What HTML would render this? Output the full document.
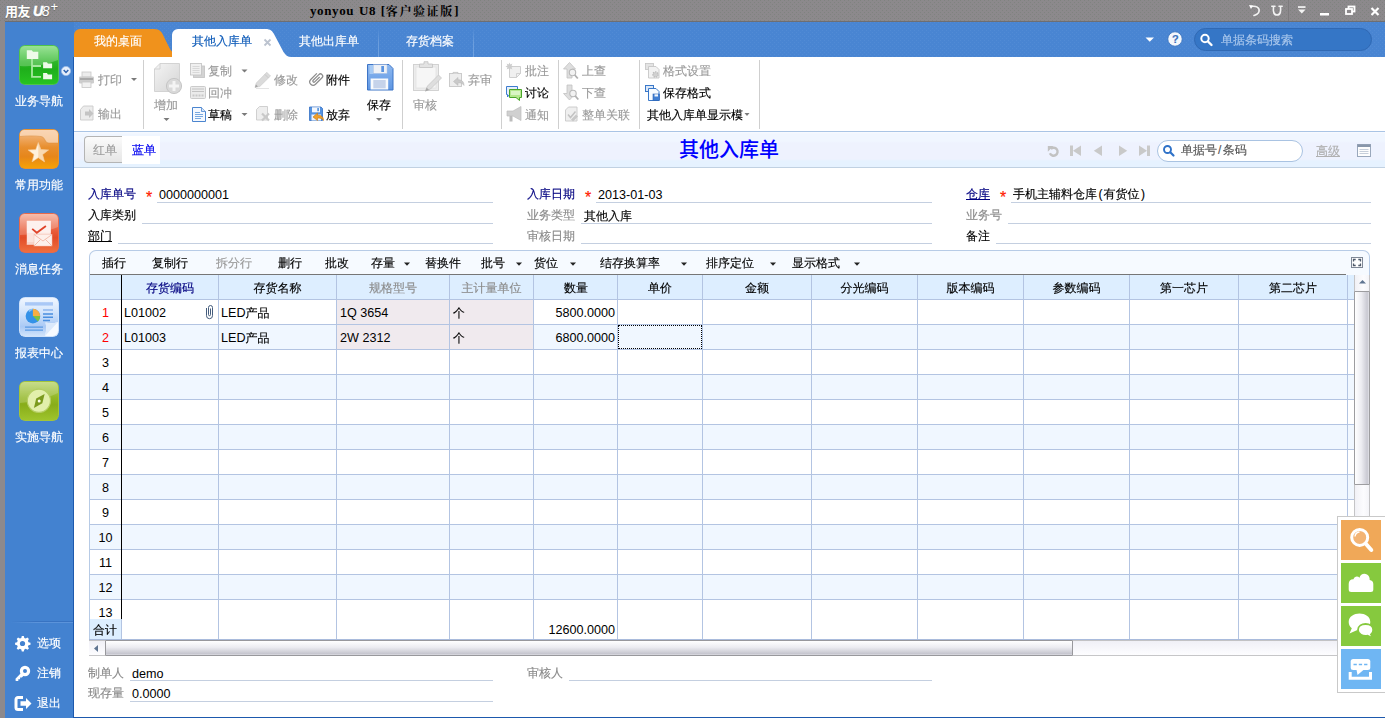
<!DOCTYPE html>
<html lang="zh-CN">
<head>
<meta charset="utf-8">
<title>yonyou U8 [客户验证版]</title>
<style>
*{box-sizing:border-box;margin:0;padding:0}
html,body{width:1385px;height:718px;overflow:hidden}
body{position:relative;background:#8c898c;font:12px/14px "Liberation Sans","WenQuanYi Zen Hei","Noto Sans CJK SC",sans-serif;color:#000;-webkit-text-stroke:.15px}
.abs,.abs>*{position:absolute}
.t{position:absolute;white-space:nowrap;line-height:14px;height:14px}
.g{color:#9a9a9a}
.n{font-size:12.6px;-webkit-text-stroke:0}
.t.n{margin-top:1px}
#grid .t.n{margin-top:0}
#grid span.n{top:0}
span.n{position:relative;top:1px}
/* title bar */
#titlebar{position:absolute;left:0;top:0;width:1385px;height:22px;background-color:#8c898c;
 background-image:radial-gradient(circle at .5px .5px,#7f837f 0,#7f837f .45px,transparent .75px),radial-gradient(circle at 2.5px 2.5px,#7f837f 0,#7f837f .45px,transparent .75px);background-size:4px 4px}
#brand{-webkit-text-stroke:0;left:5px;top:4px;color:#fff;font:bold 13px/14px "Liberation Sans","Noto Sans CJK SC",sans-serif;text-shadow:0 1px 1px #666;letter-spacing:-.5px}
#wtitle{-webkit-text-stroke:0;left:310px;top:4px;font:bold 13px/14px "Liberation Serif","Noto Serif CJK SC",serif;color:#000;letter-spacing:.6px;word-spacing:1px}
/* blue frame */
#blue{position:absolute;left:5px;top:21px;width:1380px;height:697px;background:#4382d0;border-top:1px solid #6e6e72}
#side{position:absolute;left:5px;top:23px;width:69px;height:693px}
.sicon{position:absolute;left:14px;width:40px;height:40px;border-radius:6px}
.slabel{position:absolute;left:1px;width:66px;text-align:center;color:#fff;font-size:12px;line-height:14px}
/* tabs */
#tabbar{position:absolute;left:74px;top:23px;width:1311px;height:34px}
/* content */
#content{position:absolute;left:74px;top:57px;width:1311px;height:660px;background:#fff;box-shadow:-1px 0 0 #1d59ad,-1px 1px 0 #1d59ad,0 1px 0 #1d59ad}
#toolbar{position:absolute;left:0;top:0;width:1311px;height:75px;background:#fff;border-bottom:1px solid #a9c4e5}
.vsep{position:absolute;top:3px;width:1px;height:69px;background:#cfcfcf}
#navrow{position:absolute;left:0;top:75px;width:1311px;height:36px;border-top:0;background:linear-gradient(#f8fbff 0,#f0f6ff 2px,#f0f6ff 9px,#eef2fe 11px,#eef2fe 27px,#e6f2ff 29px,#e6f2ff);border-bottom:1px solid #c1d1e2}
.ul{position:absolute;height:1px;background:#c4cfe0}
/* grid */
#form .g{color:#8a8a8a}
#grid{position:absolute;left:15px;top:193px;width:1280px;height:406px}
</style>
</head>
<body>
<div id="titlebar"></div>
<div class="t" id="brand">用友<i style="font-size:14px;letter-spacing:-1.500px;margin-left:3px;-webkit-text-stroke:.5px #fff">U</i><i style="font-size:14px;font-weight:normal;letter-spacing:-1px">8</i><span style="font-size:13px;font-weight:normal;position:relative;top:-5px;left:2px">+</span></div>
<div class="t" id="wtitle">yonyou U8 [<span style="font-size:12px;letter-spacing:1.600px;position:relative;top:.5px">客户验证版</span><span style="margin-left:.5px">]</span></div>
<svg class="t" style="left:1240px;top:0;width:145px;height:22px" viewBox="1240 0 145 22">
 <g fill="none" stroke="#f2f2f2" stroke-width="1.600" stroke-linecap="round">
  <path d="M1251 6.5c5-1 9 1 8 5c-.6 2.300-3 3.500-5 4"/>
  <path d="M1273.500 6.500c-.5 5 0 8.500 3.500 8.500s4-3.500 3.500-8.500M1271.800 6.300h3.200M1279 6.300h3.200"/>
 </g>
 <path d="M1249 5l4 .5-2 3.500z" fill="#fff"/>
 <rect x="1288" y="0" width="1" height="21" fill="#7d7b7d"/>
 <rect x="1298" y="6.200" width="7.500" height="1.700" fill="#f4f4f4"/>
 <path d="M1298 9.500h7.500l-3.750 4z" fill="#f4f4f4"/>
 <rect x="1320" y="13" width="9" height="2.500" fill="#fff"/>
 <g fill="none" stroke="#fff" stroke-width="1.800">
  <rect x="1348.500" y="6.500" width="6" height="5"/>
  <rect x="1346" y="9" width="6" height="5" fill="#8c898c"/>
  <path d="M1371.500 8l7 7M1378.500 8l-7 7" stroke-width="2.200"/>
 </g>
</svg>
<div id="blue"></div>
<div id="side">
 <!-- icon 1 : green tree -->
 <svg class="sicon" style="top:22px" viewBox="0 0 40 40">
  <defs>
   <linearGradient id="g1" x1="0" y1="0" x2="0" y2="1"><stop offset="0" stop-color="#7fdc7a"/><stop offset=".42" stop-color="#2fb62b"/><stop offset=".6" stop-color="#1fae1b"/><stop offset="1" stop-color="#27c421"/></linearGradient>
   <linearGradient id="g2" x1="0" y1="0" x2="0" y2="1"><stop offset="0" stop-color="#f6c193"/><stop offset=".45" stop-color="#e88f2f"/><stop offset=".7" stop-color="#e6861a"/><stop offset="1" stop-color="#f7a306"/></linearGradient>
   <linearGradient id="g3" x1="0" y1="0" x2="0" y2="1"><stop offset="0" stop-color="#f6ae99"/><stop offset=".45" stop-color="#e85c3a"/><stop offset=".62" stop-color="#e24c28"/><stop offset="1" stop-color="#f0703f"/></linearGradient>
   <linearGradient id="g4" x1="0" y1="0" x2="0" y2="1"><stop offset="0" stop-color="#f1f7ff"/><stop offset=".35" stop-color="#d5e6fc"/><stop offset=".75" stop-color="#a9c9f5"/><stop offset="1" stop-color="#d3e5fb"/></linearGradient>
   <linearGradient id="g5" x1="0" y1="0" x2="0" y2="1"><stop offset="0" stop-color="#bdd673"/><stop offset=".42" stop-color="#92b725"/><stop offset=".6" stop-color="#88ad19"/><stop offset="1" stop-color="#9fc52d"/></linearGradient>
  </defs>
  <rect x=".5" y=".5" width="39" height="39" rx="5" fill="url(#g1)" stroke="#4fc44a"/>
  <path d="M1 6a5 5 0 0 1 5-5h28a5 5 0 0 1 5 5v9c-12 5-26 7-38 6z" fill="#fff" opacity=".22"/>
  <g fill="#eefbe9"><path d="M7.800 5.200h5l1.200 1.600h5.300v7.200h-11.500z"/><path d="M24.100 17.200h3.800l1 1.300h4.200v4.800h-9z"/><path d="M24.100 28.100h3.800l1 1.300h4.200v4.800h-9z"/></g>
  <path d="M13 14v17.800h9M13 21h9" fill="none" stroke="#a6e8a0" stroke-width="1.800"/>
 </svg>
 <svg class="t" style="left:56px;top:43px;width:10px;height:10px" viewBox="0 0 10 10"><circle cx="5" cy="5" r="4.600" fill="#e6effb" stroke="#9dbce6" stroke-width=".8"/><path d="M2.700 4l2.300 2.400 2.300-2.400" fill="none" stroke="#2d63b0" stroke-width="1.500"/></svg>
 <div class="slabel" style="top:71px">业务导航</div>
 <!-- icon 2 : star -->
 <svg class="sicon" style="top:106px" viewBox="0 0 40 40">
  <rect x=".5" y=".5" width="39" height="39" rx="5" fill="url(#g2)" stroke="#e8932f"/>
  <path d="M1 7.500c8-.8 15-.8 21 0c2 .3 3 1.500 4 3.500c1 2 2 3 4 3h9v-8.500a4.500 4.500 0 0 0-4.500-4.500h-29a4.500 4.500 0 0 0-4.500 4.500z" fill="#fbdcc0" opacity=".75"/>
  <path d="M1 7.500c8-.8 15-.8 21 0c2 .3 3 1.500 4 3.500c1 2 2 3 4 3h9" fill="none" stroke="#d98a3a" stroke-width=".7" opacity=".7"/>
  <path d="M19.3 13.4 L21.9 20.6 L29.6 20.9 L23.6 25.6 L25.6 32.9 L19.3 28.7 L13.0 32.9 L15.0 25.6 L9.0 20.9 L16.7 20.6z" fill="#fff1dc" stroke="#f3c690" stroke-width=".6"/>
  <path d="M19.300 13.400L22 20.600l7.600.3-6 4.800 2 7.300-6.300-4.200z" fill="#f4c48c" opacity=".55"/>
 </svg>
 <div class="slabel" style="top:155px">常用功能</div>
 <!-- icon 3 : mail -->
 <svg class="sicon" style="top:190px" viewBox="0 0 40 40">
  <rect x=".5" y=".5" width="39" height="39" rx="5" fill="url(#g3)" stroke="#e8694a"/>
  <path d="M1 6a5 5 0 0 1 5-5h28a5 5 0 0 1 5 5v8c-12 5-26 8-38 8z" fill="#fff" opacity=".2"/>
  <rect x="7.800" y="7.800" width="24" height="24" fill="#fbe3dc"/><rect x="7.800" y="7.800" width="24" height="12" fill="#fff" opacity=".5"/>
  <path d="M7.800 30h8M7.800 31.500h8" stroke="#f0b3a2" stroke-width=".6"/>
  <path d="M13.200 15.900l4.600 3.900 9.100-6.800" fill="none" stroke="#e0442a" stroke-width="1.800"/>
  <rect x="15" y="21.300" width="18" height="11.700" fill="#fdf0eb" stroke="#f4c2b4" stroke-width=".5"/>
  <path d="M15 21.500l9 6.500 9-6.500M15 33l6.500-6.500M33 33l-6.500-6.500" fill="none" stroke="#efb09d" stroke-width=".8"/>
 </svg>
 <div class="slabel" style="top:239px">消息任务</div>
 <!-- icon 4 : report -->
 <svg class="sicon" style="top:274px" viewBox="0 0 40 40">
  <rect x=".5" y=".5" width="39" height="39" rx="5" fill="url(#g4)" stroke="#cfe2fa"/>
  <rect x="6" y="5.200" width="28" height="3.400" fill="#a9c8f6"/>
  <circle cx="13.900" cy="19.100" r="7.300" fill="#3492e8"/><path d="M13.900 19.100v-7.300a7.300 7.300 0 0 1 7.300 7.300z" fill="#f6ad42"/><path d="M13.900 19.100h7.300a7.300 7.300 0 0 1-2.300 5.300z" fill="#7dc242"/>
  <path d="M10 14.500a5.500 5.500 0 0 1 3.500-2.200" fill="none" stroke="#9fd0fb" stroke-width="1.500" opacity=".8"/>
  <path d="M24 13h10" stroke="#8db6ee" stroke-width="1.600"/><path d="M24 16.900h10M24 20.300h10M24 23.400h7" stroke="#4a8fe0" stroke-width="1.500"/>
  <path d="M6 30.200h18M6 33.200h18" stroke="#5a9ae4" stroke-width="1.300"/>
  <path d="M26 39c1.500-5 1.500-9.500.5-13.500c4 1 8.500 1 12.500-.5v9a5 5 0 0 1-5 5z" fill="#f6faff"/>
  <path d="M26.500 25.500c4 1 8.500 1 12.500-.5l-13 14c1.500-5 1.500-9.500.5-13.500z" fill="#dbe9fb"/>
 </svg>
 <div class="slabel" style="top:323px">报表中心</div>
 <!-- icon 5 : compass -->
 <svg class="sicon" style="top:358px" viewBox="0 0 40 40">
  <rect x=".5" y=".5" width="39" height="39" rx="5" fill="url(#g5)" stroke="#a3c43a"/>
  <path d="M1 6a5 5 0 0 1 5-5h28a5 5 0 0 1 5 5v6c-12 6-26 9-38 10z" fill="#fff" opacity=".18"/>
  <circle cx="19.900" cy="19.800" r="11.600" fill="#e2efab" stroke="#b4cd62" stroke-width="1.200"/>
  <path d="M25.600 13l-2.300 9.300-8.400 4.600 2.300-9.300z" fill="#7b9a1e"/><circle cx="20.200" cy="19.900" r="1.500" fill="#fbfde9"/>
 </svg>
 <div class="slabel" style="top:407px">实施导航</div>
 <div style="position:absolute;left:6px;top:598px;width:63px;height:1px;background:linear-gradient(90deg,#4382d0,#3873c2 40%,#3873c2)"></div><div style="position:absolute;left:6px;top:599px;width:63px;height:1px;background:linear-gradient(90deg,#4382d0,#5b93da 40%,#5b93da)"></div>
 <!-- bottom -->
 <svg class="t" style="left:9px;top:612px;width:17px;height:17px" viewBox="0 0 17 17"><path d="M8.500 1l1.300 0 .5 2 1.400.6 1.800-1 1.400 1.400-1 1.800.6 1.400 2 .5v2l-2 .5-.6 1.400 1 1.800-1.400 1.400-1.800-1-1.400.6-.5 2h-2l-.5-2-1.400-.6-1.800 1-1.400-1.400 1-1.800-.6-1.400-2-.5v-2l2-.5.600-1.400-1-1.800 1.400-1.400 1.800 1 1.400-.6.500-2z" fill="#fff"/><circle cx="8.500" cy="8.500" r="2.600" fill="#4382d0"/></svg>
 <div class="t" style="left:32px;top:613px;color:#fff">选项</div>
 <svg class="t" style="left:9px;top:642px;width:17px;height:17px" viewBox="0 0 17 17"><circle cx="11" cy="6" r="3.600" fill="none" stroke="#fff" stroke-width="3.200"/><path d="M7.500 7.500l-6 6.200 .2 2.300h2.600v-1.700h1.800v-1.700h1.800l2.800-3" fill="#fff"/></svg>
 <div class="t" style="left:32px;top:643px;color:#fff">注销</div>
 <svg class="t" style="left:9px;top:672px;width:18px;height:17px" viewBox="0 0 18 17"><path d="M9 2.500h-5a2 2 0 0 0-2 2v8a2 2 0 0 0 2 2h5" fill="none" stroke="#fff" stroke-width="3"/><path d="M6.500 6.300h5.500v-3.300l5.500 5.500-5.500 5.500v-3.300h-5.500z" fill="#fff"/></svg>
 <div class="t" style="left:32px;top:673px;color:#fff">退出</div>
</div>
<div style="position:absolute;left:74px;top:22px;width:1311px;height:35px;background-color:#4985d2;background-image:radial-gradient(circle at .5px .5px,#518bd5 0,#518bd5 .45px,transparent .75px),radial-gradient(circle at 2.500px 2.500px,#518bd5 0,#518bd5 .45px,transparent .75px);background-size:4px 4px"></div>
<div id="tabbar">
 <svg style="position:absolute;left:0;top:0;width:1311px;height:34px" viewBox="74 23 1311 34">
  <path d="M74 57v-22a6 6 0 0 1 6-6h74c6 0 8 3 10 8l6 12c1 2 2 3 4 3v5z" fill="#f0921c"/>
  <path d="M172 57v-22a6 6 0 0 1 6-6h87.500c5 0 7 2 9 6l9 17c2 3 4 5 8 5z" fill="#fff"/>
  <defs><linearGradient id="tsep" x1="0" y1="0" x2="0" y2="1"><stop offset="0" stop-color="#4a86d3"/><stop offset=".5" stop-color="#6a9ddd"/><stop offset="1" stop-color="#6fa1df"/></linearGradient></defs><rect x="378" y="28" width="1" height="29" fill="url(#tsep)"/><rect x="473" y="28" width="1" height="29" fill="url(#tsep)"/>
  <path d="M264.500 39.500l6 6M270.500 39.500l-6 6" stroke="#bcc3cf" stroke-width="1.800"/>
  <path d="M1145.500 37.500h8.500l-4.250 4.300z" fill="#fff"/>
  <circle cx="1175" cy="39" r="7.200" fill="#f4f7fc" stroke="#3b73bd" stroke-width=".8"/>
  <rect x="1194.500" y="28.500" width="177" height="22" rx="11" fill="#3576c6" stroke="#3069b4"/>
  <circle cx="1205" cy="38.500" r="3.700" fill="none" stroke="#fff" stroke-width="2"/><path d="M1208 41.500l3.500 3.500" stroke="#fff" stroke-width="2.400" stroke-linecap="round"/>
 </svg>
 <div class="t" style="left:20px;top:11px;color:#fff">我的桌面</div>
 <div class="t" style="left:118px;top:11px;color:#0c5ab8">其他入库单</div>
 <div class="t" style="left:225px;top:11px;color:#fff">其他出库单</div>
 <div class="t" style="left:332px;top:11px;color:#fff">存货档案</div>
 <div class="t" style="left:1098px;top:9px;color:#3a72bd;font:bold 11px/14px 'Liberation Sans',sans-serif">?</div>
 <div class="t" style="left:1147px;top:10px;color:#a9c7ec">单据条码搜索</div>
</div>
<div id="content">
 <div id="toolbar">
 <svg style="position:absolute;left:0;top:0;width:1311px;height:74px" viewBox="74 57 1311 74">
  <defs>
   <linearGradient id="gd" x1="0" y1="0" x2="1" y2="1"><stop offset="0" stop-color="#f4f4f4"/><stop offset="1" stop-color="#d4d4d4"/></linearGradient>
   <linearGradient id="gs" x1="0" y1="0" x2="0" y2="1"><stop offset="0" stop-color="#8db8f0"/><stop offset="1" stop-color="#5e96e2"/></linearGradient>
  </defs>
  <g fill="#cfcfcf">
   <rect x="143" y="60" width="1" height="69"/><rect x="402" y="60" width="1" height="69"/><rect x="501" y="60" width="1" height="69"/><rect x="558" y="60" width="1" height="69"/><rect x="639" y="60" width="1" height="69"/><rect x="759" y="60" width="1" height="69"/>
  </g>
  <!-- dropdown arrows -->
  <g fill="#7a7a7a">
   <path d="M131 78h6l-3 3z"/><path d="M163.500 118h6l-3 3z"/><path d="M241.500 69.500h6l-3 3z"/><path d="M241.500 113h6l-3 3z"/><path d="M376 118h6l-3 3z"/><path d="M744.500 113h5l-2.500 3z"/>
  </g>
  <!-- print -->
  <g>
   <rect x="82" y="72" width="9" height="5" fill="#ececec" stroke="#c9c9c9" stroke-width=".8"/>
   <rect x="79" y="76.500" width="15" height="7" rx="1.200" fill="#cdcdcd"/><rect x="80" y="78" width="13" height="2" fill="#a9a9a9"/>
   <rect x="82" y="82" width="9" height="5.500" fill="#f1f1f1" stroke="#c6c6c6" stroke-width=".8"/>
  </g>
  <!-- export -->
  <g>
   <path d="M80.500 109.500l3-3.500h9.500v14h-12.500z" fill="#ececec" stroke="#cbcbcb" stroke-width=".9"/>
   <path d="M85 111.500h4v-2.500l4.500 4.500-4.500 4.500v-2.500h-4z" fill="#c4c4c4"/>
  </g>
  <!-- add big -->
  <g>
   <path d="M154.500 69l5.500-5.500h19.500v28h-25z" fill="url(#gd)" stroke="#cfcfcf" stroke-width=".9"/>
   <path d="M154.500 69h5.500v-5.500" fill="none" stroke="#cfcfcf" stroke-width=".9"/>
   <circle cx="174" cy="86" r="7.600" fill="#d9d9d9" stroke="#c2c2c2" stroke-width=".9"/>
   <path d="M172.500 81h3v3.500h3.500v3h-3.500v3.500h-3v-3.500h-3.500v-3h3.500z" fill="#f4f4f4"/>
  </g>
  <!-- copy -->
  <g stroke="#c6c6c6" stroke-width=".9">
   <rect x="193.500" y="66" width="11" height="11.500" fill="#d3d3d3"/>
   <rect x="190.500" y="63.500" width="11" height="11.500" fill="#f0f0f0"/>
   <path d="M192.500 66.500h7M192.500 68.500h7M192.500 70.500h7M192.500 72.500h7" stroke-width=".7" stroke="#cdcdcd"/>
  </g>
  <!-- huichong -->
  <g>
   <rect x="190.500" y="86.500" width="15" height="12" rx="1" fill="#ebebeb" stroke="#c6c6c6" stroke-width=".9"/>
   <path d="M192 89h12M192 91.500h12" stroke="#c3c3c3" stroke-width="1"/>
   <path d="M192.500 95.500h2M195.500 95.500h2M198.500 95.500h2M201.500 95.500h2" stroke="#c8c8c8" stroke-width="2"/>
  </g>
  <!-- draft -->
  <g>
   <path d="M192.500 107.500h9l4 4v10h-13z" fill="#f5f9ff" stroke="#4b85cf" stroke-width="1"/>
   <path d="M201.500 107.500v4h4" fill="#d8e6f8" stroke="#4b85cf" stroke-width=".8"/>
   <path d="M195 112.500h5M195 114.500h8M195 116.500h8M195 118.500h6" stroke="#6b9fdd" stroke-width=".9"/>
  </g>
  <!-- modify pencil -->
  <g>
   <path d="M256 88.500h13" stroke="#e4e4e4" stroke-width="1"/>
   <path d="M255 87.500l1.300-4.500 10.500-10.700 3.700 3.700-10.700 10.500z" fill="#dbdbdb" stroke="#c8c8c8" stroke-width=".6"/>
   <path d="M264.800 74.300l3.700 3.700" stroke="#c4c4c4" stroke-width=".8"/>
   <path d="M255 87.500l.9-3 2.100 2.100z" fill="#a4a4a4"/>
  </g>
  <!-- delete -->
  <g>
   <path d="M256.500 109.500l3-3h8v13.500h-11z" fill="#eeeeee" stroke="#cccccc" stroke-width=".9"/>
   <path d="M262 113.500l7 7M269 113.500l-7 7" stroke="#c9c9c9" stroke-width="2.200"/>
  </g>
  <!-- attach paperclip -->
  <g fill="none" stroke="#8c8c8c" stroke-width="1.100" transform="translate(316 79) rotate(45) scale(1.120) translate(-4.500 -8.100)">
   <path d="M1.500 4V11.700A3 3 0 0 0 7.500 11.700V3.500A2 2 0 0 0 3.500 3.500V10.700A1 1 0 0 0 5.500 10.700V4.500"/>
  </g>
  <!-- abandon -->
  <g>
   <path d="M309.500 107h11.500l1.500 1.500v12h-13z" fill="#5593e0" stroke="#3570c4" stroke-width=".8"/>
   <rect x="312" y="107.300" width="8" height="5" fill="#f4f7fc"/><rect x="317.300" y="108" width="1.600" height="3.200" fill="#4f8fdc"/>
   <rect x="311.500" y="114.500" width="9.500" height="6" fill="#eef3fb"/>
   <path d="M313 117l4.500-4v2.200c3.500 0 6 1.300 6 5.300-1.300-2-3-2.600-6-2.500v2.500z" fill="#f0a02a" stroke="#c77810" stroke-width=".6"/>
  </g>
  <!-- save big -->
  <g>
   <path d="M367.500 64.500h21.500l4 4v21.500h-25.500z" fill="url(#gs)" stroke="#3d74c6" stroke-width="1"/>
   <rect x="369.500" y="65" width="3.500" height="9" fill="#a6caf4"/>
   <rect x="373.300" y="64.800" width="13.700" height="8.500" fill="#eef1f6" stroke="#b4c6e2" stroke-width=".5"/>
   <rect x="381.300" y="66" width="2.700" height="6" fill="#5a93e0"/>
   <rect x="370.600" y="78.500" width="17.600" height="11" fill="#f8fafd"/>
   <rect x="373.300" y="80" width="12.400" height="8.300" fill="#c6d3ea"/>
  </g>
  <!-- audit big -->
  <g>
   <rect x="413.500" y="64.500" width="25" height="26" fill="#ececec" stroke="#cfcfcf" stroke-width=".9"/>
   <rect x="416" y="67" width="20" height="21" fill="#f6f6f6" stroke="#dddddd" stroke-width=".6"/>
   <path d="M419.500 67.500v-3.500h4.500v-2.300h4v2.300h4.500v3.500z" fill="#e3e3e3" stroke="#c2c2c2" stroke-width=".8"/>
   <path d="M425.500 91l2-5 11-11 3 3-11 11z" fill="#dedede" stroke="#c4c4c4" stroke-width=".7"/>
   <path d="M425.100 91.400l1.500-3.800 2.400 2.400z" fill="#a8a8a8"/>
  </g>
  <!-- unaudit -->
  <g>
   <rect x="449.500" y="73.500" width="12" height="13" fill="#ededed" stroke="#c6c6c6" stroke-width=".9"/>
   <path d="M453 74v-1.600h5v1.600" fill="#d6d6d6" stroke="#c2c2c2" stroke-width=".7"/>
   <path d="M453.500 81.500l4.500-4v2.300c3.500 0 6 1.500 6 5.700-1.300-2.200-3-2.800-6-2.700v2.600z" fill="#c9c9c9" stroke="#b5b5b5" stroke-width=".5"/>
  </g>
  <!-- annotate -->
  <g>
   <path d="M509.500 66.500h11v7l-4 4h-7z" fill="#f0f0f0" stroke="#c9c9c9" stroke-width=".9"/>
   <path d="M520.500 73.500h-4v4" fill="none" stroke="#c9c9c9" stroke-width=".8"/>
   <path d="M509.500 62.500l.9 2 2-.9-.9 2 2 .9-2 .9.900 2-2-.9-.9 2-.9-2-2 .9.900-2-2-.9 2-.9-.9-2 2 .9z" fill="#cdcdcd"/>
  </g>
  <!-- discuss -->
  <g>
   <path d="M506.500 86.500h11v8h-8l-2 2.500v-2.500h-1z" fill="#e6effa" stroke="#3d7ccf" stroke-width="1"/>
   <path d="M509.500 89.500h12v8h-2v3l-3.500-3h-6.500z" fill="#b4e88e" stroke="#4aa52a" stroke-width="1"/><rect x="511" y="91" width="9" height="4" fill="#d9f5c4"/>
  </g>
  <!-- notify megaphone -->
  <g>
   <path d="M507 111h6l8-4.500v14l-8-4.500h-6z" fill="#d0d0d0" stroke="#bdbdbd" stroke-width=".7"/>
   <rect x="509.500" y="116" width="3" height="5.500" fill="#bcbcbc"/>
  </g>
  <!-- up query -->
  <g>
   <path d="M569.500 62.500l6 6.500h-3.500v9h-5v-9h-3.500z" fill="#dedede" stroke="#c2c2c2" stroke-width=".8"/>
   <circle cx="572.500" cy="72.500" r="3.200" fill="#f2f2f2" stroke="#b9b9b9" stroke-width="1.100"/><path d="M574.800 75l3 3.500" stroke="#b0b0b0" stroke-width="1.800"/>
  </g>
  <!-- down query -->
  <g>
   <path d="M569.500 100l6-6.500h-3.500v-8.500h-5v8.500h-3.500z" fill="#dedede" stroke="#c2c2c2" stroke-width=".8"/>
   <circle cx="573" cy="93.500" r="3.200" fill="#f2f2f2" stroke="#b9b9b9" stroke-width="1.100"/><path d="M575.300 96l3 3.500" stroke="#b0b0b0" stroke-width="1.800"/>
  </g>
  <!-- link whole -->
  <g>
   <path d="M565.500 110l3-3h8.500v14h-11.500z" fill="#efefef" stroke="#c8c8c8" stroke-width=".9"/>
   <path d="M568 114.500l2.500 3 5-6" fill="none" stroke="#c2c2c2" stroke-width="1.500"/>
   <path d="M571 119.500l5-5 2 2-5 5z" fill="#c8c8c8"/>
  </g>
  <!-- format setting -->
  <g>
   <rect x="645.500" y="63.500" width="8" height="6" fill="#e4e4e4" stroke="#c4c4c4" stroke-width=".8"/>
   <path d="M648.500 66.500h7.500l3 3v8.500h-10.500z" fill="#f2f2f2" stroke="#c6c6c6" stroke-width=".9"/>
   <circle cx="655.500" cy="74.500" r="2.600" fill="#d0d0d0" stroke="#bcbcbc" stroke-width="1.400" stroke-dasharray="1.300 1"/>
  </g>
  <!-- save format -->
  <g>
   <rect x="645.500" y="85.500" width="8" height="6" fill="#dbe8f8" stroke="#3a78c9" stroke-width="1"/>
   <path d="M648.500 88.500h7.500l3 3v9h-10.500z" fill="#f7fbff" stroke="#3a78c9" stroke-width="1"/>
   <rect x="653" y="94" width="6.500" height="6.500" fill="#3f7ed3" stroke="#2a62b2" stroke-width=".6"/><rect x="654.500" y="94.300" width="3.500" height="2.200" fill="#f2f6fb"/>
  </g>
 </svg>
 <div class="t g" style="left:24px;top:16px">打印</div>
 <div class="t g" style="left:24px;top:50px">输出</div>
 <div class="t g" style="left:80px;top:41px">增加</div>
 <div class="t g" style="left:134px;top:7px">复制</div>
 <div class="t g" style="left:134px;top:29px">回冲</div>
 <div class="t" style="left:134px;top:51px">草稿</div>
 <div class="t g" style="left:200px;top:16px">修改</div>
 <div class="t g" style="left:200px;top:51px">删除</div>
 <div class="t" style="left:252px;top:16px">附件</div>
 <div class="t" style="left:252px;top:51px">放弃</div>
 <div class="t" style="left:293px;top:41px">保存</div>
 <div class="t g" style="left:339px;top:41px">审核</div>
 <div class="t g" style="left:394px;top:16px">弃审</div>
 <div class="t g" style="left:451px;top:7px">批注</div>
 <div class="t" style="left:451px;top:29px">讨论</div>
 <div class="t g" style="left:451px;top:51px">通知</div>
 <div class="t g" style="left:508px;top:7px">上查</div>
 <div class="t g" style="left:508px;top:29px">下查</div>
 <div class="t g" style="left:508px;top:51px">整单关联</div>
 <div class="t g" style="left:589px;top:7px">格式设置</div>
 <div class="t" style="left:589px;top:29px">保存格式</div>
 <div class="t" style="left:573px;top:51px">其他入库单显示模</div>
</div>
 <div id="navrow">
  <div style="position:absolute;left:10px;top:4px;width:38px;height:27px;border:1px solid #b4b4b4;border-right:none;border-radius:4px 0 0 4px;background:linear-gradient(#fbfbfb,#e6e6e6)"></div>
  <div style="position:absolute;left:48px;top:4px;width:38px;height:28px;background:#fff"></div>
  <div class="t" style="left:19px;top:11px;color:#9c9c9c">红单</div>
  <div class="t" style="left:58px;top:11px;color:#0000f0">蓝单</div>
  <div class="t" style="left:605px;top:6px;height:24px;font:500 20px/24px 'Liberation Sans','Noto Sans CJK SC',sans-serif;color:#0000ff;-webkit-text-stroke:0">其他入库单</div>
  <svg style="position:absolute;left:966px;top:4px;width:345px;height:30px" viewBox="1040 136 345 30">
   <g fill="none" stroke="#c2c2c2" stroke-width="2.400"><path d="M1050.800 148.800A4 4 0 1 1 1049.900 153.300"/></g><path d="M1047.800 146h5.700l-5.700 5.700z" fill="#c2c2c2"/>
   <g fill="#c9c9c9">
    <rect x="1070" y="145.500" width="3" height="10.500"/><path d="M1081 145.500v10.500l-8-5.250z"/>
    <path d="M1102 145.500v10.500l-8.200-5.250z"/>
    <path d="M1119 145.500v10.500l8.200-5.250z"/>
    <path d="M1139 145.500v10.500l8-5.250z"/><rect x="1147" y="145.500" width="3" height="10.500"/>
   </g>
   <rect x="1157.500" y="140.500" width="145" height="21" rx="10.500" fill="#fff" stroke="#a9c3e2"/>
   <circle cx="1167.500" cy="149.500" r="3.500" fill="none" stroke="#2f72c8" stroke-width="1.900"/><path d="M1170.500 152.500l3 3" stroke="#2f72c8" stroke-width="2.200" stroke-linecap="round"/>
   <rect x="1357.500" y="144.500" width="13" height="12" fill="#fdfdfd" stroke="#9aa8bc"/><rect x="1357.500" y="144.500" width="13" height="2.500" fill="#8896aa"/>
   <path d="M1359.500 149.500h9M1359.500 151.500h9M1359.500 153.500h9" stroke="#bfc8d6" stroke-width=".9"/>
  </svg>
  <div class="t" style="left:1107px;top:11px;color:#555">单据号<span style="margin:0 1.500px 0 1px">/</span>条码</div>
  <div class="t" style="left:1242px;top:12px;color:#b0b0b0;text-decoration:underline">高级</div>
 </div>
 <!-- form header -->
 <div id="form">
  <div class="t" style="left:14px;top:130px;color:#000080">入库单号</div><div class="t" style="left:72px;top:134px;color:#ff1a00;font:16px/14px 'Liberation Sans',sans-serif;-webkit-text-stroke:.2px #ff1a00">*</div><div class="t n" style="left:85px;top:130px">0000000001</div><div class="ul" style="left:83px;top:145px;width:336px"></div>
  <div class="t" style="left:14px;top:151px">入库类别</div><div class="ul" style="left:68px;top:166px;width:351px"></div>
  <div class="t" style="left:14px;top:172px;text-decoration:underline">部门</div><div class="ul" style="left:44px;top:186px;width:375px"></div>

  <div class="t" style="left:453px;top:130px;color:#000080">入库日期</div><div class="t" style="left:511px;top:134px;color:#ff1a00;font:16px/14px 'Liberation Sans',sans-serif;-webkit-text-stroke:.2px #ff1a00">*</div><div class="t n" style="left:524px;top:130px">2013-01-03</div><div class="ul" style="left:522px;top:145px;width:336px"></div>
  <div class="t g" style="left:453px;top:151px">业务类型</div><div class="t" style="left:510px;top:152px">其他入库</div><div class="ul" style="left:507px;top:166px;width:351px"></div>
  <div class="t g" style="left:453px;top:172px">审核日期</div><div class="ul" style="left:507px;top:186px;width:351px"></div>

  <div class="t" style="left:892px;top:130px;color:#000080;text-decoration:underline">仓库</div><div class="t" style="left:926px;top:134px;color:#ff1a00;font:16px/14px 'Liberation Sans',sans-serif;-webkit-text-stroke:.2px #ff1a00">*</div><div class="t" style="left:939px;top:130px">手机主辅料仓库<span style="margin:0 1px 0 1.500px">(</span>有货位<span style="margin-left:1.500px">)</span></div><div class="ul" style="left:937px;top:145px;width:360px"></div>
  <div class="t g" style="left:892px;top:151px">业务号</div><div class="ul" style="left:934px;top:166px;width:363px"></div>
  <div class="t" style="left:892px;top:172px">备注</div><div class="ul" style="left:922px;top:186px;width:375px"></div>
  <!-- footer -->
  <div class="t g" style="left:14px;top:609px">制单人</div><div class="t n" style="left:58px;top:609px">demo</div><div class="ul" style="left:56px;top:623px;width:363px"></div>
  <div class="t g" style="left:453px;top:609px">审核人</div><div class="ul" style="left:495px;top:623px;width:363px"></div>
  <div class="t g" style="left:14px;top:629px">现存量</div><div class="t n" style="left:58px;top:629px">0.0000</div><div class="ul" style="left:56px;top:644px;width:363px"></div>
 </div>
 <div id="grid">
<div style="position:absolute;left:0;top:0;width:1281px;height:25px;border:1px solid #b7cbe6;border-bottom:none;border-radius:7px 7px 0 0;background:#f6faff"></div>
<div class="t" style="left:13px;top:6px">插行</div>
<div class="t" style="left:63px;top:6px">复制行</div>
<div class="t g" style="left:127px;top:6px">拆分行</div>
<div class="t" style="left:189px;top:6px">删行</div>
<div class="t" style="left:236px;top:6px">批改</div>
<div class="t" style="left:282px;top:6px">存量</div>
<div class="t" style="left:336px;top:6px">替换件</div>
<div class="t" style="left:392px;top:6px">批号</div>
<div class="t" style="left:445px;top:6px">货位</div>
<div class="t" style="left:511px;top:6px">结存换算率</div>
<div class="t" style="left:617px;top:6px">排序定位</div>
<div class="t" style="left:703px;top:6px">显示格式</div>
<svg style="position:absolute;left:0;top:0;width:1281px;height:25px" viewBox="89 250 1281 25"><g fill="#222"><path d="M404 262.500h6l-3 3.200z"/><path d="M516 262.500h6l-3 3.200z"/><path d="M570 262.500h6l-3 3.200z"/><path d="M681 262.500h6l-3 3.200z"/><path d="M770 262.500h6l-3 3.200z"/><path d="M854 262.500h6l-3 3.200z"/></g><rect x="1351.500" y="257.500" width="11" height="10" fill="#fff" stroke="#7f8896"/><path d="M1353.500 261.500v-2h2.200M1358.300 259.500h2.200v2M1360.500 263.500v2h-2.200M1355.700 265.500h-2.200v-2" fill="none" stroke="#4f5a6b" stroke-width="1.300"/></svg>
<div style="position:absolute;left:1px;top:24px;width:1256px;height:1px;background:#767676"></div>
<div style="position:absolute;left:0;top:25px;width:1px;height:365px;background:#b7cbe6"></div>
<div style="position:absolute;left:1px;top:25px;width:1264px;height:25px;background:#ddeeff;border-bottom:1px solid #b3c4e2"></div>
<div style="position:absolute;left:1px;top:50px;width:1264px;height:25px;background:#fff;border-bottom:1px solid #b3c4e2;"></div>
<div style="position:absolute;left:1px;top:75px;width:1264px;height:25px;background:#f0f7ff;border-bottom:1px solid #b3c4e2;"></div>
<div style="position:absolute;left:1px;top:100px;width:1264px;height:25px;background:#fff;border-bottom:1px solid #b3c4e2;"></div>
<div style="position:absolute;left:1px;top:125px;width:1264px;height:25px;background:#f0f7ff;border-bottom:1px solid #b3c4e2;"></div>
<div style="position:absolute;left:1px;top:150px;width:1264px;height:25px;background:#fff;border-bottom:1px solid #b3c4e2;"></div>
<div style="position:absolute;left:1px;top:175px;width:1264px;height:25px;background:#f0f7ff;border-bottom:1px solid #b3c4e2;"></div>
<div style="position:absolute;left:1px;top:200px;width:1264px;height:25px;background:#fff;border-bottom:1px solid #b3c4e2;"></div>
<div style="position:absolute;left:1px;top:225px;width:1264px;height:25px;background:#f0f7ff;border-bottom:1px solid #b3c4e2;"></div>
<div style="position:absolute;left:1px;top:250px;width:1264px;height:25px;background:#fff;border-bottom:1px solid #b3c4e2;"></div>
<div style="position:absolute;left:1px;top:275px;width:1264px;height:25px;background:#f0f7ff;border-bottom:1px solid #b3c4e2;"></div>
<div style="position:absolute;left:1px;top:300px;width:1264px;height:25px;background:#fff;border-bottom:1px solid #b3c4e2;"></div>
<div style="position:absolute;left:1px;top:325px;width:1264px;height:25px;background:#f0f7ff;border-bottom:1px solid #b3c4e2;"></div>
<div style="position:absolute;left:1px;top:350px;width:1264px;height:19px;background:#fff;"></div>
<div style="position:absolute;left:1px;top:369px;width:1264px;height:20px;background:#fff"></div>
<div style="position:absolute;left:1px;top:369px;width:31px;height:20px;background:#ddeeff"></div>
<div style="position:absolute;left:248px;top:50px;width:196px;height:24px;background:#f0eaee"></div>
<div style="position:absolute;left:248px;top:75px;width:196px;height:24px;background:#f0eaee"></div>
<div style="position:absolute;left:129px;top:25px;width:1px;height:364px;background:#b3c4e2"></div>
<div style="position:absolute;left:247px;top:25px;width:1px;height:364px;background:#b3c4e2"></div>
<div style="position:absolute;left:360px;top:25px;width:1px;height:364px;background:#b3c4e2"></div>
<div style="position:absolute;left:444px;top:25px;width:1px;height:364px;background:#b3c4e2"></div>
<div style="position:absolute;left:528px;top:25px;width:1px;height:364px;background:#b3c4e2"></div>
<div style="position:absolute;left:613px;top:25px;width:1px;height:364px;background:#b3c4e2"></div>
<div style="position:absolute;left:722px;top:25px;width:1px;height:364px;background:#b3c4e2"></div>
<div style="position:absolute;left:828px;top:25px;width:1px;height:364px;background:#b3c4e2"></div>
<div style="position:absolute;left:934px;top:25px;width:1px;height:364px;background:#b3c4e2"></div>
<div style="position:absolute;left:1040px;top:25px;width:1px;height:364px;background:#b3c4e2"></div>
<div style="position:absolute;left:1149px;top:25px;width:1px;height:364px;background:#b3c4e2"></div>
<div style="position:absolute;left:1258px;top:25px;width:1px;height:364px;background:#b3c4e2"></div>
<div style="position:absolute;left:32px;top:25px;width:1px;height:344px;background:#000"></div><div style="position:absolute;left:32px;top:369px;width:1px;height:20px;background:#b3c4e2"></div>
<div class="t" style="left:33px;top:31px;width:96px;text-align:center;color:#000080">存货编码</div>
<div class="t" style="left:130px;top:31px;width:117px;text-align:center;color:#000">存货名称</div>
<div class="t" style="left:248px;top:31px;width:112px;text-align:center;color:#8c8c8c">规格型号</div>
<div class="t" style="left:361px;top:31px;width:83px;text-align:center;color:#8c8c8c">主计量单位</div>
<div class="t" style="left:445px;top:31px;width:84px;text-align:center;color:#000">数量</div>
<div class="t" style="left:529px;top:31px;width:84px;text-align:center;color:#000">单价</div>
<div class="t" style="left:614px;top:31px;width:108px;text-align:center;color:#000">金额</div>
<div class="t" style="left:723px;top:31px;width:105px;text-align:center;color:#000">分光编码</div>
<div class="t" style="left:829px;top:31px;width:105px;text-align:center;color:#000">版本编码</div>
<div class="t" style="left:935px;top:31px;width:105px;text-align:center;color:#000">参数编码</div>
<div class="t" style="left:1041px;top:31px;width:108px;text-align:center;color:#000">第一芯片</div>
<div class="t" style="left:1150px;top:31px;width:108px;text-align:center;color:#000">第二芯片</div>
<div class="t n" style="left:1px;top:56px;width:31px;text-align:center;color:#f00">1</div>
<div class="t n" style="left:1px;top:81px;width:31px;text-align:center;color:#f00">2</div>
<div class="t n" style="left:1px;top:106px;width:31px;text-align:center;color:#000">3</div>
<div class="t n" style="left:1px;top:131px;width:31px;text-align:center;color:#000">4</div>
<div class="t n" style="left:1px;top:156px;width:31px;text-align:center;color:#000">5</div>
<div class="t n" style="left:1px;top:181px;width:31px;text-align:center;color:#000">6</div>
<div class="t n" style="left:1px;top:206px;width:31px;text-align:center;color:#000">7</div>
<div class="t n" style="left:1px;top:231px;width:31px;text-align:center;color:#000">8</div>
<div class="t n" style="left:1px;top:256px;width:31px;text-align:center;color:#000">9</div>
<div class="t n" style="left:1px;top:281px;width:31px;text-align:center;color:#000">10</div>
<div class="t n" style="left:1px;top:306px;width:31px;text-align:center;color:#000">11</div>
<div class="t n" style="left:1px;top:331px;width:31px;text-align:center;color:#000">12</div>
<div class="t n" style="left:1px;top:356px;width:31px;text-align:center;color:#000">13</div>
<div class="t" style="left:4px;top:373px">合计</div>
<div class="t n" style="left:35px;top:56px">L01002</div>
<div class="t" style="left:132px;top:56px"><span class="n">LED</span>产品</div>
<div class="t n" style="left:251px;top:56px">1Q 3654</div>
<div class="t" style="left:364px;top:56px">个</div>
<div class="t n" style="left:445px;top:56px;width:81px;text-align:right">5800.0000</div>
<div class="t n" style="left:35px;top:81px">L01003</div>
<div class="t" style="left:132px;top:81px"><span class="n">LED</span>产品</div>
<div class="t n" style="left:251px;top:81px">2W 2312</div>
<div class="t" style="left:364px;top:81px">个</div>
<div class="t n" style="left:445px;top:81px;width:81px;text-align:right">6800.0000</div>
<div class="t n" style="left:445px;top:373px;width:81px;text-align:right">12600.0000</div>
<svg style="position:absolute;left:116px;top:54px;width:10px;height:16px" viewBox="0 0 10 16"><path d="M1.500 4V11.700A3 3 0 0 0 7.500 11.700V3.500A2 2 0 0 0 3.500 3.500V10.700A1 1 0 0 0 5.500 10.700V4.500" fill="none" stroke="#445c7c" stroke-width="1"/></svg>
<div style="position:absolute;left:529px;top:75px;width:84px;height:24px;border:1px dotted #000"></div>
<div style="position:absolute;left:1265px;top:25px;width:16px;height:365px;background:linear-gradient(90deg,#c4c4c6 0,#c4c4c6 1px,#f1f1f6 1px,#fcfcfe 60%,#f4f4f8 15px,#c4c4c6 15px)"></div>

<svg style="position:absolute;left:1270px;top:29px;width:7px;height:5px" viewBox="0 0 7 5"><path d="M0 4.500l3.500-3.500 3.500 3.500z" fill="#5f7591"/></svg>
<div style="position:absolute;left:1265px;top:41px;width:16px;height:194px;border:1px solid #9d9da0;border-radius:1px;background:linear-gradient(90deg,#ffffff,#ededf2 45%,#c9c9d2 88%,#e4e4ea)"></div>
<div style="position:absolute;left:0;top:389px;width:1265px;height:1px;background:#a9bbdc"></div><div style="position:absolute;left:0;top:390px;width:1248px;height:16px;border-top:1px solid #c2c2c4;border-bottom:1px solid #c6c6c8;background:linear-gradient(#f0f0f6,#fdfdff)"></div>
<svg style="position:absolute;left:5px;top:395px;width:4px;height:7px" viewBox="0 0 4 7"><path d="M4 0l-4 3.500 4 3.500z" fill="#5f7591"/></svg>
<div style="position:absolute;left:16px;top:390px;width:968px;height:16px;border:1px solid #98989c;border-radius:1px;background:linear-gradient(#ffffff,#ececf1 45%,#c6c6cf 90%,#dcdce2)"></div>
</div>
</div>
<div id="float" style="position:absolute;left:1337px;top:516px;width:48px;height:177px;background:#fff;border:1px solid #c9c9c9;border-right:none">
 <div style="position:absolute;left:3px;top:3px;width:40px;height:40px;background:#f0a858"></div>
 <div style="position:absolute;left:3px;top:46px;width:40px;height:40px;background:#86c93e"></div>
 <div style="position:absolute;left:3px;top:89px;width:40px;height:40px;background:#86c93e"></div>
 <div style="position:absolute;left:3px;top:132px;width:40px;height:40px;background:#6fb6f3"></div>
 <svg style="position:absolute;left:3px;top:3px;width:40px;height:169px" viewBox="0 0 40 169">
  <circle cx="18.700" cy="17.400" r="8" fill="#f3b474" stroke="#fff" stroke-width="3"/><path d="M25 24l5.300 6" stroke="#fff" stroke-width="4" stroke-linecap="round"/><path d="M14 16.500a5 5 0 0 1 4.500-4.500" fill="none" stroke="#fff" stroke-width="1.400"/>
  <path d="M10.200 72a2.500 2.500 0 0 1-2.500-2.500v-5.500c0-3 2-5 4.800-4.800c.8-2.800 4.200-3.400 6-1.400c.8-3.800 4.800-5.200 7.500-3.300c2 1.200 2.800 3.200 2.700 5.500c2.300.3 3.600 2 3.600 4v5.500a2.500 2.500 0 0 1-2.500 2.500z" fill="#fff"/>
  <path d="M7.700 102c0-11.500 21.600-11.500 21.600 0c0 6-6 9.500-13.500 8.300l-7.300 3.200l2.300-5.300c-2-1.600-3.100-3.700-3.100-6.200z" fill="#fff"/>
  <path d="M17 110c0-8 15.200-8 15.200 0c0 1.800-.8 3.300-2.200 4.400l2 4l-5.500-2.800c-4.500.8-9.500-1.300-9.500-5.600z" fill="#fff" stroke="#86c93e" stroke-width="1.800"/>
  <rect x="9.700" y="139" width="19.600" height="11" rx="2.500" fill="#fff"/><path d="M15.500 149.500h7.500l-6.500 5.500z" fill="#fff"/>
  <path d="M12.500 144.500h3.300M17.800 144.500h3.300M23.100 144.500h3.300" stroke="#6fb6f3" stroke-width="1.300"/>
  <path d="M9.200 152v6.300h20.300v-6.300" fill="none" stroke="#fff" stroke-width="3"/>
 </svg>
</div>
</body>
</html>
